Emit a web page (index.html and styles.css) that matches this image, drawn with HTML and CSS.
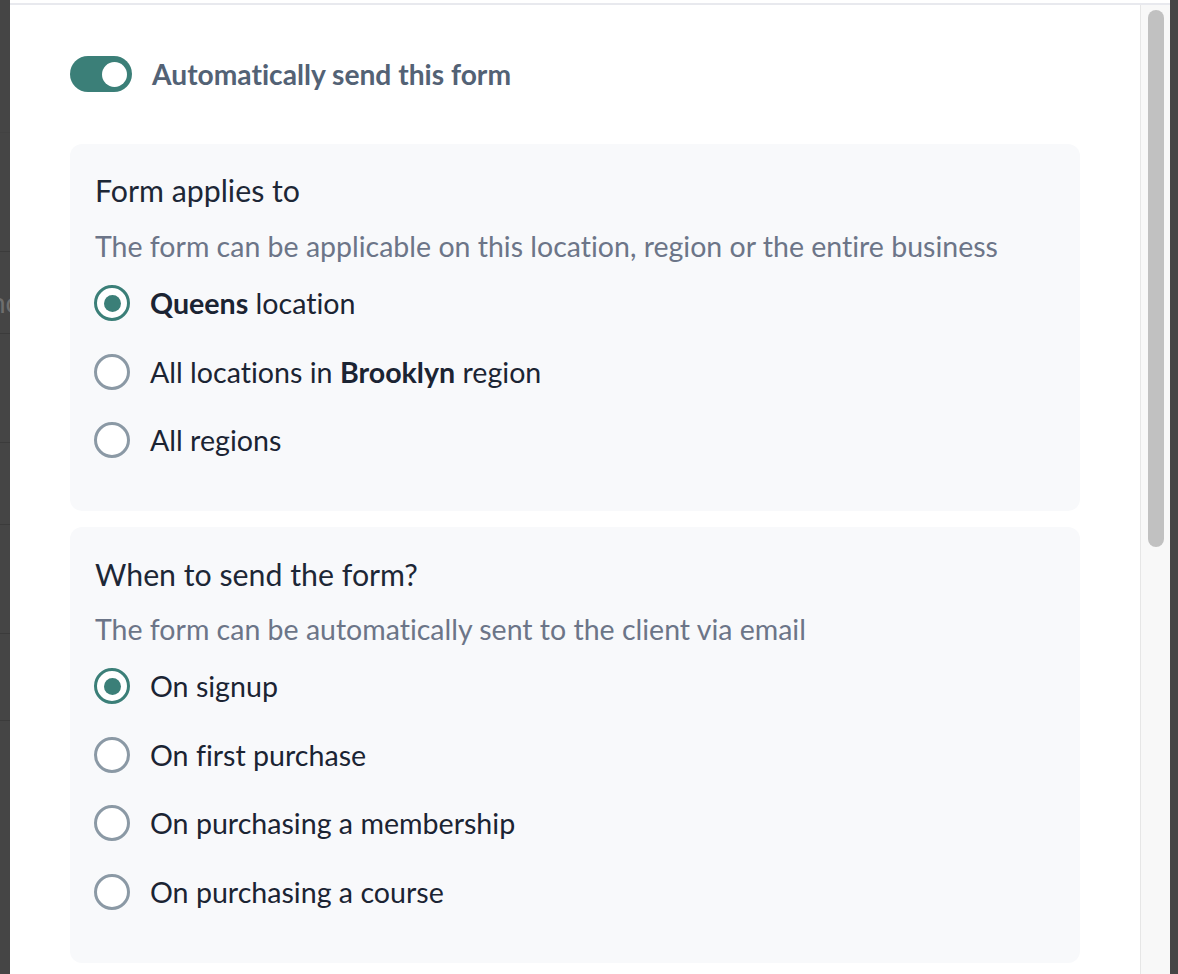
FILE: index.html
```html
<!DOCTYPE html>
<html lang="en">
<head>
<meta charset="utf-8">
<title>Form settings</title>
<link rel="stylesheet" href="styles.css">
</head>
<body>
<div class="page">
  <div class="behind">
    <div class="brow r1"></div>
    <div class="brow r2"></div>
    <div class="brow r3"><span class="btext">nc</span></div>
    <div class="brow r4"></div>
    <div class="brow r5"></div>
    <div class="brow r6"></div>
    <div class="brow r7"></div>
    <div class="brow r8"></div>
  </div>
  <div class="modal">
    <div class="modal-top"></div>
    <div class="modal-body">
      <div class="content">
        <div class="toggle-row">
          <span class="toggle"><span class="knob"></span></span>
          <span class="toggle-label">Automatically send this form</span>
        </div>

        <section class="card">
          <h2 class="card-title">Form applies to</h2>
          <p class="card-desc">The form can be applicable on this location, region or the entire business</p>
          <div class="options">
            <label class="option"><span class="radio checked"></span><span class="opt-text"><b>Queens</b> location</span></label>
            <label class="option"><span class="radio"></span><span class="opt-text">All locations in <b>Brooklyn</b> region</span></label>
            <label class="option"><span class="radio"></span><span class="opt-text">All regions</span></label>
          </div>
        </section>

        <section class="card">
          <h2 class="card-title">When to send the form?</h2>
          <p class="card-desc">The form can be automatically sent to the client via email</p>
          <div class="options">
            <label class="option"><span class="radio checked"></span><span class="opt-text">On signup</span></label>
            <label class="option"><span class="radio"></span><span class="opt-text">On first purchase</span></label>
            <label class="option"><span class="radio"></span><span class="opt-text">On purchasing a membership</span></label>
            <label class="option"><span class="radio"></span><span class="opt-text">On purchasing a course</span></label>
          </div>
        </section>
      </div>
      <div class="scrollbar"><div class="thumb"></div></div>
    </div>
  </div>
  <div class="behind-right"></div>
</div>
</body>
</html>
```

FILE: styles.css
```css
* { box-sizing: border-box; }
html, body {
  margin: 0;
  padding: 0;
  height: 974px;
  overflow: hidden;
  background: #454545;
  font-family: Lato, "Open Sans", Arial, sans-serif;
  font-variant-ligatures: none;
}
.page {
  display: flex;
  height: 974px;
}
.behind {
  width: 10px;
  flex: none;
  display: flex;
  flex-direction: column;
  overflow: hidden;
}
.brow {
  border-bottom: 1px solid #3b3b3b;
  flex: none;
}
.r1 { height: 133px; border-bottom-color: #424242; }
.r2 { height: 119px; }
.r3 { height: 82px; }
.r4 { height: 109px; }
.r5 { height: 82px; }
.r6 { height: 109px; }
.r7 { height: 87px; }
.r8 { height: 253px; border-bottom: none; }
.btext {
  display: block;
  margin-top: 34px;
  margin-left: -10px;
  font-size: 28px;
  line-height: 32px;
  color: #6e6e6e;
  white-space: nowrap;
}
.behind-right {
  width: 8px;
  flex: none;
}
.modal {
  flex: 1;
  background: #fff;
  display: flex;
  flex-direction: column;
}
.modal-top {
  height: 5px;
  border-top: 3px solid #fff;
  background: #e8e9ee;
  flex: none;
}
.modal-body {
  flex: 1;
  display: flex;
  min-height: 0;
}
.content {
  flex: 1;
  padding: 51px 60px 0 60px;
  overflow: hidden;
}
.toggle-row {
  display: flex;
  align-items: center;
  gap: 20px;
  height: 36px;
}
.toggle {
  width: 62px;
  height: 36px;
  border-radius: 18px;
  background: #3b7f78;
  display: flex;
  align-items: center;
  justify-content: flex-end;
  padding-right: 5px;
  flex: none;
}
.knob {
  width: 25px;
  height: 25px;
  border-radius: 50%;
  background: #fff;
}
.toggle-label {
  font-size: 28.2px;
  font-weight: 700;
  color: #536275;
}
.card {
  background: #f8f9fb;
  border-radius: 12px;
  padding: 28px 25px 53px 24px;
  margin-top: 52px;
}
.card + .card {
  margin-top: 16px;
  padding-top: 29px;
}
.card-title {
  margin: 0;
  font-size: 30.3px;
  line-height: 36px;
  font-weight: 400;
  color: #1d2736;
  padding-left: 1px;
}
.card-desc {
  margin: 22px 0 0 0;
  font-size: 28.5px;
  line-height: 32px;
  color: #6c7588;
  padding-left: 1px;
}
.card + .card .card-desc {
  margin-top: 21px;
}
.options {
  margin-top: 23px;
  display: flex;
  flex-direction: column;
  gap: 32.5px;
}
.option {
  display: flex;
  align-items: center;
  gap: 20px;
  height: 36px;
}
.radio {
  width: 36px;
  height: 36px;
  border-radius: 50%;
  border: 3.5px solid #8b99a5;
  background: #fff;
  flex: none;
  display: flex;
  align-items: center;
  justify-content: center;
}
.radio.checked {
  border-color: #3b7f78;
}
.radio.checked::after {
  content: "";
  width: 17px;
  height: 17px;
  border-radius: 50%;
  background: #3b7f78;
}
.opt-text {
  font-size: 28.6px;
  color: #1b2433;
}
.opt-text b {
  font-weight: 700;
}
.scrollbar {
  width: 30px;
  flex: none;
  border-left: 1px solid #e6e6e6;
  background: #f8f8f8;
  padding: 5px 0 0 7px;
}
.thumb {
  width: 16px;
  height: 537px;
  border-radius: 8px;
  background: #c1c1c1;
}
```
